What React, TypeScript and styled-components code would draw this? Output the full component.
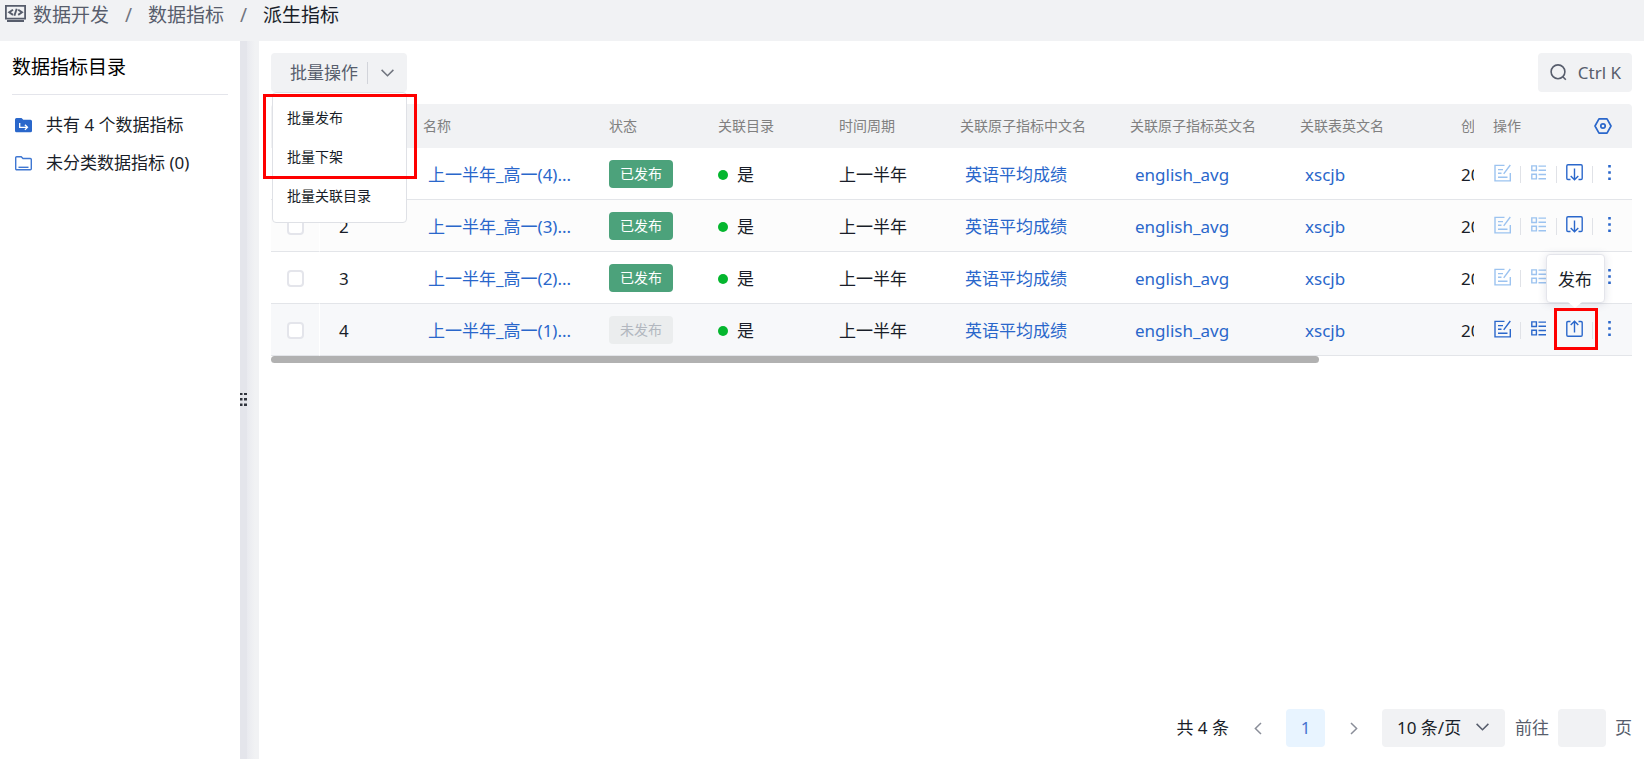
import React from "react";
import styled, { createGlobalStyle, css } from "styled-components";

const Global = createGlobalStyle`
  * { box-sizing: border-box; }
  body {
    margin: 0;
    background: #f1f2f4;
    color: #191e29;
    font: 400 17px/24px "Noto Sans", "Noto Sans CJK SC", sans-serif;
  }
  button, input, select { font: inherit; color: inherit; margin: 0; }
  button { border: 0; padding: 0; background: none; cursor: pointer; }
  a { text-decoration: none; color: inherit; }
  ul, ol { list-style: none; margin: 0; padding: 0; }
  svg { display: block; flex: none; }
`;

const Page = styled.div`
  display: flex;
  flex-direction: column;
  min-height: 100vh;
`;

const TopBar = styled.nav`
  height: 41px;
  padding-left: 5px;
  display: flex;
  gap: 7px;
  color: #575d6c;
`;

const TopIcon = styled.div`
  padding-top: 5px;
`;

const Crumbs = styled.ol`
  display: flex;
  font-size: 19px;
  line-height: 30px;
`;

const Crumb = styled.li<{ $current?: boolean }>`
  color: ${(p) => (p.$current ? "#191e29" : "inherit")};
  &:not(:last-child)::after {
    content: "/";
    display: inline-block;
    width: 39px;
    text-align: center;
    color: #71757f;
  }
`;

const Body = styled.div`
  flex: 1;
  display: flex;
`;

const Sidebar = styled.aside`
  flex: none;
  width: 240px;
  padding: 12px;
  background: #fff;
`;

const SideTitle = styled.h2`
  margin: 0 0 11px;
  padding-bottom: 12px;
  border-bottom: 1px solid #e4e5eb;
  font-size: 19px;
  font-weight: 400;
  line-height: 29px;
  color: #000;
`;

const SideItem = styled.a`
  display: flex;
  align-items: center;
  gap: 14px;
  height: 38px;
  padding-left: 3px;
`;

const Splitter = styled.div`
  flex: none;
  width: 19px;
  display: flex;
  align-items: center;
  background: linear-gradient(to right, #e4e5eb 7px, #e9eaef 7px, #f1f2f4 15px);
`;

const Main = styled.main`
  position: relative;
  flex: 1;
  min-width: 0;
  padding: 12px;
  background: #fff;
  display: flex;
  flex-direction: column;
`;

const Toolbar = styled.div`
  display: flex;
  justify-content: space-between;
  margin-bottom: 12px;
`;

const Batch = styled.div`
  position: relative;
`;

const greyBox = css`
  height: 39px;
  border-radius: 4px;
  background: #f1f2f4;
`;

const BatchButton = styled.button`
  ${greyBox}
  display: flex;
  align-items: center;
  width: 136px;
  padding-left: 19px;
  color: #575d6c;
`;

const Chevron = styled.span`
  display: flex;
  margin-left: 9px;
  height: 22px;
  padding-left: 13px;
  align-items: center;
  border-left: 1px solid #d2d4da;
  color: #71757f;
`;

const Menu = styled.ul`
  position: absolute;
  z-index: 5;
  top: 39px;
  left: 1px;
  width: 135px;
  padding: 5px 0 7px;
  border: 1px solid #dfe1e6;
  border-radius: 4px;
  background: #fff;
`;

const MenuItem = styled.button`
  display: block;
  width: 100%;
  padding-left: 14px;
  text-align: left;
  font-size: 14px;
  line-height: 39px;
`;

const mark = css`
  position: absolute;
  border: 3px solid #fe0000;
  pointer-events: none;
`;

const MenuMark = styled.div`
  ${mark}
  z-index: 6;
  top: 41px;
  left: -8px;
  width: 154px;
  height: 85px;
`;

const SearchButton = styled.button`
  ${greyBox}
  display: flex;
  align-items: center;
  gap: 11px;
  padding: 0 11px 0 12px;
  color: #575d6c;
`;

const Scroller = styled.div`
  overflow-x: auto;
  scrollbar-width: none;
  border-radius: 4px 4px 0 0;
`;

const Table = styled.table`
  width: 100%;
  min-width: 1361px;
  table-layout: fixed;
  border-collapse: separate;
  border-spacing: 0;
`;

const Th = styled.th<{ $w?: number }>`
  width: ${(p) => (p.$w ? `${p.$w}px` : "auto")};
  height: 44px;
  padding: 0 0 0 19px;
  overflow: hidden;
  background: #f1f2f4;
  text-align: left;
  font-size: 14px;
  font-weight: 400;
  line-height: 20px;
  color: #808080;
  white-space: nowrap;
`;

const ThAction = styled(Th)`
  position: sticky;
  right: 0;
  z-index: 1;
  padding-right: 20px;
`;

const HeadAction = styled.div`
  display: flex;
  align-items: center;
  justify-content: space-between;
  color: #808080;
`;

const Td = styled.td`
  height: 52px;
  padding: 2px 0 0 19px;
  overflow: hidden;
  border-bottom: 1px solid #e3e5e9;
  background: inherit;
  white-space: nowrap;
`;

const TdCheck = styled(Td)`
  padding: 2px 0 0 16px;
  border-right: 1px solid #fff;
`;

const TdTag = styled(Td)`
  padding-top: 0;
`;

const TdAction = styled(Td)`
  position: sticky;
  right: 0;
  z-index: 1;
  overflow: visible;
  padding: 0 0 2px 20px;
`;

const Tr = styled.tr<{ $bg: string }>`
  background: ${(p) => p.$bg};
`;

const Check = styled.input`
  appearance: none;
  display: block;
  width: 17px;
  height: 17px;
  margin: 0;
  border: 2px solid #e4e5eb;
  border-radius: 4px;
  background: #fff;
`;

const CellLink = styled.a`
  padding-left: 5px;
  color: #2a67cb;
`;

const Tag = styled.span<{ $off?: boolean }>`
  display: block;
  width: 64px;
  height: 28px;
  border-radius: 4px;
  font-size: 14px;
  line-height: 28px;
  text-align: center;
  color: ${(p) => (p.$off ? "#b2b7bf" : "#fff")};
  background: ${(p) => (p.$off ? "#ebedee" : "#4ca27b")};
`;

const Yes = styled.span`
  display: flex;
  align-items: center;
  gap: 9px;
  &::before {
    content: "";
    width: 10px;
    height: 10px;
    border-radius: 50%;
    background: #04b62e;
  }
`;

const Actions = styled.div`
  display: flex;
  align-items: center;
`;

const Divider = styled.span`
  width: 1px;
  height: 17px;
  margin-top: 4px;
  background: #e0e2e7;
`;

const Act = styled.button<{ $w: number; $faint?: boolean }>`
  position: relative;
  display: flex;
  width: ${(p) => p.$w}px;
  height: 19px;
  align-items: center;
  color: ${(p) => (p.$faint ? "#9cc3f0" : "#2a67cb")};
`;

const ActSlot = styled(Act)`
  justify-content: center;
`;

const Tip = styled.span`
  position: absolute;
  bottom: 35px;
  left: 50%;
  width: 59px;
  height: 49px;
  margin-left: -29px;
  border: 1px solid #e4e5eb;
  border-radius: 4px;
  background: #fff;
  box-shadow: 0 1px 8px rgba(60, 70, 110, 0.16);
  color: #191e29;
  line-height: 49px;
  text-align: center;
  &::after {
    content: "";
    position: absolute;
    left: 50%;
    top: 100%;
    margin-left: -7px;
    border: 7px solid transparent;
    border-top: 6px solid #fff;
    border-bottom: 0;
  }
`;

const ActMark = styled.span`
  ${mark}
  left: 50%;
  top: -11px;
  width: 44px;
  height: 42px;
  margin-left: -21px;
`;

const Track = styled.div`
  height: 7px;
`;

const Thumb = styled.div`
  width: 77%;
  height: 7px;
  border-radius: 4px;
  background: #b1b1b1;
`;

const Pager = styled.div`
  display: flex;
  align-items: center;
  justify-content: flex-end;
  margin-top: auto;
  height: 38px;
  color: #575d6c;
`;

const Total = styled.span`
  color: #191e29;
`;

const Arrow = styled.button`
  display: flex;
  align-items: center;
  justify-content: center;
  width: 57px;
  height: 38px;
  color: #8a8e99;
`;

const PageNo = styled.button`
  width: 39px;
  height: 38px;
  border-radius: 4px;
  background: #e8f4ff;
  color: #4673cf;
`;

const SizeBox = styled.label`
  position: relative;
  display: flex;
  width: 123px;
  margin-right: 10px;
  svg {
    position: absolute;
    right: 16px;
    top: 14px;
    pointer-events: none;
  }
`;

const SizeSelect = styled.select`
  ${greyBox}
  appearance: none;
  width: 100%;
  height: 38px;
  padding: 0 0 0 15px;
  border: 0;
  color: #191e29;
`;

const Goto = styled.label`
  display: flex;
  align-items: center;
  gap: 9px;
`;

const GotoInput = styled.input`
  ${greyBox}
  width: 48px;
  height: 38px;
  border: 0;
  text-align: center;
`;

type SvgProps = { w: number; h: number; sw?: number; children: React.ReactNode };

const Svg = ({ w, h, sw = 1.5, children }: SvgProps) => (
  <svg width={w} height={h} viewBox={`0 0 ${w} ${h}`} fill="none" stroke="currentColor" strokeWidth={sw} aria-hidden="true">
    {children}
  </svg>
);

const DevIcon = () => (
  <Svg w={21} h={17}>
    <path d="M.9.9h19.200v12.700H.9z" strokeWidth={1.800} />
    <path d="M2 16h17" strokeWidth={2} />
    <path d="M8 4.700 4.200 7.300 8 9.900M13.200 4.700 17 7.300l-3.800 2.600M11.700 3.800 9.400 10.800" strokeWidth={1.900} />
  </Svg>
);

const FolderFull = () => (
  <svg width="17" height="15" viewBox="0 0 17 15" fill="none" aria-hidden="true">
    <path d="M0 1.500A1.500 1.500 0 0 1 1.500 0h5L8.300 1.700h7.200A1.500 1.500 0 0 1 17 3.200v9.500a1.500 1.500 0 0 1-1.500 1.500h-14A1.500 1.500 0 0 1 0 12.700z" fill="#2a67cb" />
    <path d="M4.700 5v4.300h7.300M9.900 6.700l2.600 2.600-2.600 2.600" stroke="#fff" strokeWidth="1.300" />
  </svg>
);

const FolderEmpty = () => (
  <svg width="17" height="15" viewBox="0 0 17 15" fill="none" stroke="#3f77d2" strokeWidth="1.400" aria-hidden="true">
    <path d="M.7 1.700A1 1 0 0 1 1.700.7h4.500L8 2.500h7.300a1 1 0 0 1 1 1v9.300a1 1 0 0 1-1 1H1.700a1 1 0 0 1-1-1z" />
    <path d="M3.500 11.300h10" />
  </svg>
);

const Down = () => (
  <Svg w={13} h={8}>
    <path d="m.6.9 5.900 5.900L12.400.9" />
  </Svg>
);

const SearchIcon = () => (
  <Svg w={17} h={17} sw={1.600}>
    <circle cx="8" cy="7.800" r="6.900" />
    <path d="m12.800 12.700 3 3" />
  </Svg>
);

const SettingIcon = () => (
  <Svg w={18} h={16} sw={1.700}>
    <path d="M5 .9h8L17 8l-4 7.100H5L1 8z" stroke="#2a67cb" strokeLinejoin="round" />
    <circle cx="9" cy="8" r="2.200" stroke="#2a67cb" />
  </Svg>
);

const EditIcon = () => (
  <Svg w={17} h={18} sw={1.400}>
    <path d="M10.500 1.400H1v15.500h15.300V9" />
    <path d="M4 5.600h5M4 9.300h3.500M4 13.200h9.500M16.300 1 9.700 9.800" />
  </Svg>
);

const ListIcon = () => (
  <Svg w={15} h={15} sw={1.400}>
    <path d="M.8.9h4.600v4.600H.8zM.8 9.300h4.600v4.600H.8zM7.500 1.100H15M7.500 5.200H15M7.500 9.500H15M7.500 13.700H15" />
  </Svg>
);

const DownloadIcon = () => (
  <Svg w={17} h={17} sw={1.400}>
    <path d="M4.500 15.500H2a1.200 1.200 0 0 1-1.200-1.200V2A1.200 1.200 0 0 1 2 .8h13A1.200 1.200 0 0 1 16.200 2v12.300a1.200 1.200 0 0 1-1.200 1.200h-2.500" />
    <path d="M8.500 4.500v11.300M4.700 12l3.800 3.800 3.800-3.800" />
  </Svg>
);

const UploadIcon = () => (
  <Svg w={17} h={17} sw={1.400}>
    <path d="M4.500 1.500H2A1.200 1.200 0 0 0 .8 2.700V15A1.200 1.200 0 0 0 2 16.200h13a1.200 1.200 0 0 0 1.200-1.200V2.700A1.200 1.200 0 0 0 15 1.500h-2.500" />
    <path d="M8.500 12.500V1.200M4.700 5l3.800-3.800L12.300 5" />
  </Svg>
);

const MoreIcon = () => (
  <svg width="3" height="15" viewBox="0 0 3 15" fill="currentColor" aria-hidden="true">
    <path d="M.2 0h2.600v2.600H.2zM.2 6.200h2.600v2.600H.2zM.2 12.400h2.600V15H.2z" />
  </svg>
);

const Grip = () => (
  <svg width="8" height="14" viewBox="0 0 8 14" fill="#30343d" aria-hidden="true">
    <path d="M0 0h2.500v2H0zM4 0h3v2H4zM0 5h2.500v2.500H0zM4 5h3v2.500H4zM0 10.500h2.500V13H0zM4 10.500h3V13H4z" />
  </svg>
);

const columns: [string, number][] = [
  ["名称", 186],
  ["状态", 109],
  ["关联目录", 121],
  ["时间周期", 121],
  ["关联原子指标中文名", 170],
  ["关联原子指标英文名", 170],
  ["关联表英文名", 161],
  ["创", 32],
];

const rows = [
  { id: 1, name: "上一半年_高一(4)...", on: true },
  { id: 2, name: "上一半年_高一(3)...", on: true },
  { id: 3, name: "上一半年_高一(2)...", on: true },
  { id: 4, name: "上一半年_高一(1)...", on: false },
];

const rowColor = (id: number) => (id === 4 ? "#f7f8fa" : id === 2 ? "#fcfcfc" : "#fff");

export default function App() {
  return (
    <Page>
      <Global />
      <TopBar aria-label="breadcrumb">
        <TopIcon><DevIcon /></TopIcon>
        <Crumbs>
          <Crumb><a href="#dev">数据开发</a></Crumb>
          <Crumb><a href="#metrics">数据指标</a></Crumb>
          <Crumb $current>派生指标</Crumb>
        </Crumbs>
      </TopBar>
      <Body>
        <Sidebar>
          <SideTitle>数据指标目录</SideTitle>
          <SideItem href="#all"><FolderFull />共有 4 个数据指标</SideItem>
          <SideItem href="#none"><FolderEmpty />未分类数据指标 (0)</SideItem>
        </Sidebar>
        <Splitter><Grip /></Splitter>
        <Main>
          <Toolbar>
            <Batch>
              <BatchButton>批量操作<Chevron><Down /></Chevron></BatchButton>
              <Menu>
                <li><MenuItem>批量发布</MenuItem></li>
                <li><MenuItem>批量下架</MenuItem></li>
                <li><MenuItem>批量关联目录</MenuItem></li>
              </Menu>
              <MenuMark />
            </Batch>
            <SearchButton><SearchIcon />Ctrl K</SearchButton>
          </Toolbar>
          <Scroller>
            <Table>
              <thead>
                <tr>
                  <Th $w={49} />
                  <Th $w={84} />
                  {columns.map(([label, w]) => <Th key={label} $w={w}>{label}</Th>)}
                  <ThAction $w={158}>
                    <HeadAction>操作<button aria-label="列设置"><SettingIcon /></button></HeadAction>
                  </ThAction>
                </tr>
              </thead>
              <tbody>
                {rows.map((r) => (
                  <Tr key={r.id} $bg={rowColor(r.id)}>
                    <TdCheck><Check type="checkbox" aria-label={`选择 ${r.id}`} /></TdCheck>
                    <Td>{r.id}</Td>
                    <Td><CellLink href="#metric">{r.name}</CellLink></Td>
                    <TdTag><Tag $off={!r.on}>{r.on ? "已发布" : "未发布"}</Tag></TdTag>
                    <Td><Yes>是</Yes></Td>
                    <Td>上一半年</Td>
                    <Td><CellLink href="#atom">英语平均成绩</CellLink></Td>
                    <Td><CellLink href="#atom">english_avg</CellLink></Td>
                    <Td><CellLink href="#table">xscjb</CellLink></Td>
                    <Td>20</Td>
                    <TdAction>
                      <Actions>
                        <Act $w={26} $faint={r.on} aria-label="编辑"><EditIcon /></Act>
                        <Divider />
                        <ActSlot $w={35} $faint={r.on} aria-label="详情"><ListIcon /></ActSlot>
                        <Divider />
                        <ActSlot $w={35} aria-label={r.on ? "下架" : "发布"}>
                          {r.on ? <DownloadIcon /> : <UploadIcon />}
                          {!r.on && <><Tip role="tooltip">发布</Tip><ActMark /></>}
                        </ActSlot>
                        <Divider />
                        <ActSlot $w={33} aria-label="更多"><MoreIcon /></ActSlot>
                      </Actions>
                    </TdAction>
                  </Tr>
                ))}
              </tbody>
            </Table>
          </Scroller>
          <Track><Thumb /></Track>
          <Pager>
            <Total>共 4 条</Total>
            <Arrow aria-label="上一页"><Svg w={8} h={13}><path d="M7 1 1.400 6.500 7 12" /></Svg></Arrow>
            <PageNo>1</PageNo>
            <Arrow aria-label="下一页"><Svg w={8} h={13}><path d="m1 1 5.600 5.500L1 12" /></Svg></Arrow>
            <SizeBox aria-label="每页条数">
              <SizeSelect defaultValue="10"><option value="10">10 条/页</option></SizeSelect>
              <Down />
            </SizeBox>
            <Goto>前往<GotoInput type="text" />页</Goto>
          </Pager>
        </Main>
      </Body>
    </Page>
  );
}
